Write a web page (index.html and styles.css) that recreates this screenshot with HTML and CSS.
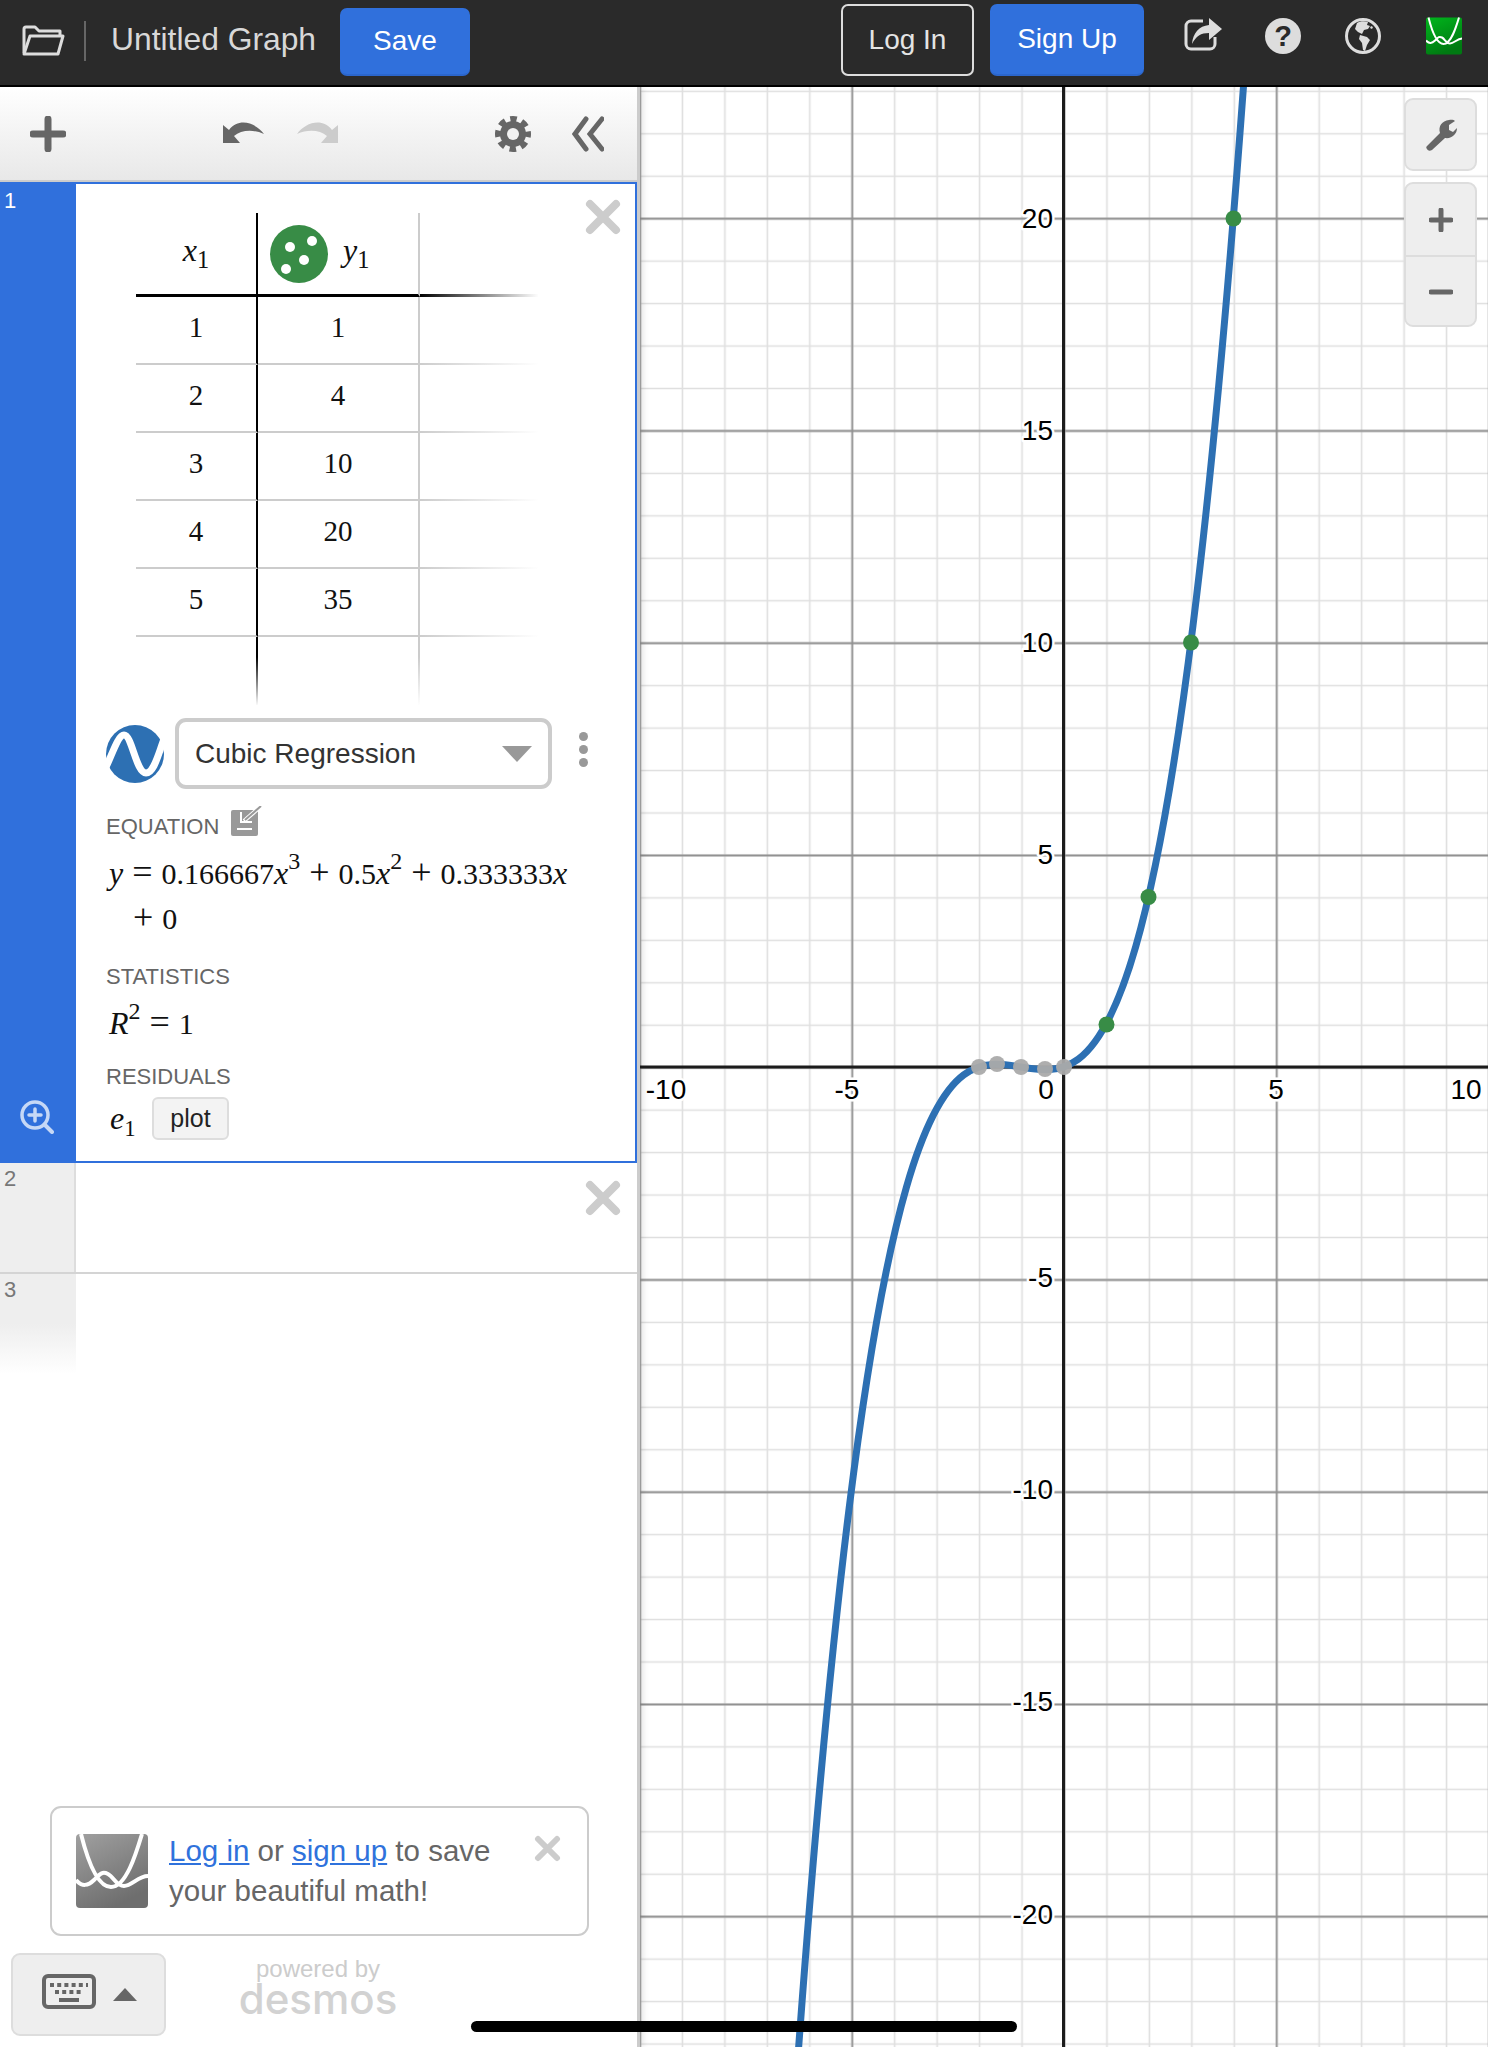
FILE: index.html
```html
<!DOCTYPE html>
<html lang="en">

<head>
    <meta charset="UTF-8" />
    <title>Untitled Graph</title>
    <link rel="stylesheet" href="styles.css">
</head>

<body>
    <div class="app">

        <!-- top bar -->
        <header class="topbar">
            <svg class="ico-folder" viewBox="0 0 43 31" fill="none" stroke="#ddd" stroke-width="3" stroke-linejoin="round">
                <path d="M2 28V4a2 2 0 0 1 2-2h9l4 4h21v5" />
                <path d="M2 29l6-18h33l-5 18z" />
            </svg>
            <span class="divider"></span>
            <span class="graph-title">Untitled Graph</span>
            <button class="btn btn-blue btn-save">Save</button>
            <span class="spacer"></span>
            <button class="btn btn-outline">Log In</button>
            <button class="btn btn-blue btn-signup">Sign Up</button>
            <svg class="ico-share" viewBox="0 0 38 33" fill="none" stroke="#ddd" stroke-width="3">
                <path d="M19 3H7a5 5 0 0 0-5 5v18a5 5 0 0 0 5 5h19a5 5 0 0 0 5-5v-7" />
                <path fill="#ddd" stroke="none" d="M25 0l13 11-13 11v-7c-8 0-13 3-17 11 1-11 7-18 17-19z" />
            </svg>
            <svg class="ico-help" viewBox="0 0 36 36">
                <circle cx="18" cy="18" r="18" fill="#ddd" />
                <text x="18" y="28" text-anchor="middle" class="help-mark">?</text>
            </svg>
            <svg class="ico-globe" viewBox="0 0 36 36">
                <circle cx="18" cy="18" r="16.5" fill="none" stroke="#ddd" stroke-width="3" />
                <path fill="#ddd" d="M12 5c3-2 8-2 11-1l-1 3 3 1-2 3-4 1-2 4-4-2-3-3zM15 17l7 2 3 3-3 5-2 6-2-1-1-7-3-4zM26 8l2 1-1 2-2-1z" />
            </svg>
            <svg class="ico-logo" viewBox="0 0 72 74">
                <defs>
                    <linearGradient id="logoGreen" x1="0" y1="0" x2="0.4" y2="1">
                        <stop offset="0" stop-color="#00b51c" />
                        <stop offset="1" stop-color="#007a12" />
                    </linearGradient>
                </defs>
                <rect width="72" height="74" rx="4" fill="url(#logoGreen)" />
                <path d="M5 0C10 20 20 53 35 53S60 20 66 0M0 46c6 7 12 6 18 0s8-9 14-6 8 12 16 12 14-10 24-10" fill="none" stroke="#fff" stroke-width="4" />
            </svg>
        </header>

        <main class="main">

            <!-- left panel -->
            <section class="panel">
                <div class="toolbar">
                    <svg class="ico-plus" viewBox="0 0 36 36">
                        <path d="M18 3v30M3 18h30" stroke="#666" stroke-width="7" stroke-linecap="round" />
                    </svg>
                    <svg class="ico-undo" viewBox="0 0 41 23">
                        <path fill="#666" d="M0 5v18h17l-6-7c7-6 19-7 30-2C33 3 16-3 6 10z" />
                    </svg>
                    <svg class="ico-undo ico-redo" viewBox="0 0 41 23">
                        <path fill="#ccc" d="M0 5v18h17l-6-7c7-6 19-7 30-2C33 3 16-3 6 10z" />
                    </svg>
                    <svg class="ico-gear" viewBox="0 0 36 36">
                        <circle cx="18" cy="18" r="13" fill="#666" />
                        <circle cx="18" cy="18" r="15" fill="none" stroke="#666" stroke-width="6" stroke-dasharray="6.5 5.28" stroke-dashoffset="3.2" />
                        <circle cx="18" cy="18" r="6" fill="#f2f2f2" />
                    </svg>
                    <svg class="ico-collapse" viewBox="0 0 32 36" fill="none" stroke="#666" stroke-width="5" stroke-linecap="round">
                        <path d="M14 3L3 18l11 15M30 3L18 18l12 15" />
                    </svg>
                </div>

                <!-- expression 1, table and regression -->
                <div class="expr expr-active">
                    <div class="gutter">
                        <span class="num">1</span>
                        <svg class="ico-zoom" viewBox="0 0 34 34" fill="none" stroke="#c6d8f6" stroke-width="3.5" stroke-linecap="round">
                            <circle cx="15" cy="15" r="13" />
                            <path d="M15 9v12M9 15h12" />
                            <path d="M25 25l7 7" stroke-width="4" />
                        </svg>
                    </div>
                    <div class="expr-body">
                        <svg class="ico-close" viewBox="0 0 36 36">
                            <path d="M5 5l26 26M31 5L5 31" stroke="#ccc" stroke-width="8" stroke-linecap="round" />
                        </svg>

                        <div class="table">
                            <div class="cell head col-a"><span class="head-x"><i>x</i><sub>1</sub></span></div>
                            <div class="cell head col-b">
                                <svg class="ico-points" viewBox="0 0 58 58">
                                    <circle cx="29" cy="29" r="29" fill="#388c46" />
                                    <circle cx="20" cy="22" r="5" fill="#fff" />
                                    <circle cx="42" cy="16" r="5" fill="#fff" />
                                    <circle cx="34" cy="35" r="5" fill="#fff" />
                                    <circle cx="16" cy="44" r="5" fill="#fff" />
                                </svg>
                                <span class="head-y"><i>y</i><sub>1</sub></span>
                            </div>
                            <div class="cell head col-c"></div>

                            <div class="cell col-a">1</div><div class="cell col-b">1</div><div class="cell col-c"></div>
                            <div class="cell col-a">2</div><div class="cell col-b">4</div><div class="cell col-c"></div>
                            <div class="cell col-a">3</div><div class="cell col-b">10</div><div class="cell col-c"></div>
                            <div class="cell col-a">4</div><div class="cell col-b">20</div><div class="cell col-c"></div>
                            <div class="cell col-a">5</div><div class="cell col-b">35</div><div class="cell col-c"></div>

                            <div class="cell last col-a"></div><div class="cell last col-b"></div><div class="cell last col-c"></div>
                        </div>

                        <div class="regression">
                            <svg class="ico-regress" viewBox="0 0 58 58">
                                <circle cx="29" cy="29" r="29" fill="#2d70b3" />
                                <path d="M0 42C6 30 12 10 18 10c8 0 12 38 22 38 8 0 12-18 18-34" fill="none" stroke="#fff" stroke-width="7" />
                            </svg>
                            <div class="select">
                                <span>Cubic Regression</span>
                                <span class="caret"></span>
                            </div>
                            <div class="kebab"><span></span><span></span><span></span></div>
                        </div>

                        <div class="label label-eq">EQUATION
                            <svg class="ico-edit" viewBox="0 0 31 30">
                                <rect y="4" width="27" height="26" rx="2" fill="#999" />
                                <path d="M6 23h15" stroke="#fff" stroke-width="2" />
                                <path d="M10 6v10h11" fill="none" stroke="#fff" stroke-width="2" />
                                <path d="M13 15L29 1" stroke="#fff" stroke-width="4" />
                                <path d="M14 14L30 0" stroke="#999" stroke-width="2" />
                            </svg>
                        </div>
                        <div class="math eq">
                            <div><i>y</i><b>=</b>0.166667<i>x</i><sup>3</sup><b>+</b>0.5<i>x</i><sup>2</sup><b>+</b>0.333333<i>x</i></div>
                            <div class="eq-wrap"><b class="lead">+</b>0</div>
                        </div>

                        <div class="label label-stats">STATISTICS</div>
                        <div class="math r2"><i>R</i><sup>2</sup><b>=</b>1</div>

                        <div class="label label-res">RESIDUALS</div>
                        <div class="residuals">
                            <span class="math e1"><i>e</i><sub>1</sub></span>
                            <button class="plot">plot</button>
                        </div>
                    </div>
                </div>

                <!-- empty expressions -->
                <div class="expr expr-empty">
                    <div class="gutter"><span class="num">2</span></div>
                    <div class="expr-body">
                        <svg class="ico-close" viewBox="0 0 36 36">
                            <path d="M5 5l26 26M31 5L5 31" stroke="#ccc" stroke-width="8" stroke-linecap="round" />
                        </svg>
                    </div>
                </div>
                <div class="expr expr-fade">
                    <div class="gutter"><span class="num">3</span></div>
                    <div class="expr-body"></div>
                </div>

                <!-- save notice -->
                <div class="notice">
                    <svg class="ico-notice" viewBox="0 0 72 74">
                        <defs>
                            <linearGradient id="logoGray" x1="0" y1="0" x2="0.5" y2="1">
                                <stop offset="0" stop-color="#a0a0a0" />
                                <stop offset="1" stop-color="#6e6e6e" />
                            </linearGradient>
                        </defs>
                        <rect width="72" height="74" rx="4" fill="url(#logoGray)" />
                        <path d="M5 0C10 20 20 53 35 53S60 20 66 0M0 46c6 7 12 6 18 0s8-9 14-6 8 12 16 12 14-10 24-10" fill="none" stroke="#fff" stroke-width="4" />
                    </svg>
                    <p><a href="#">Log in</a> or <a href="#">sign up</a> to save<br>your beautiful math!</p>
                    <svg class="ico-notice-close" viewBox="0 0 27 27">
                        <path d="M4 4l19 19M23 4L4 23" stroke="#ccc" stroke-width="6" stroke-linecap="round" />
                    </svg>
                </div>

                <div class="panel-foot">
                    <button class="kbd-btn">
                        <svg class="ico-kbd" viewBox="0 0 54 35">
                            <rect x="2" y="2" width="50" height="31" rx="4" fill="none" stroke="#666" stroke-width="4" />
                            <path d="M8 11h38M13 18h28" stroke="#666" stroke-width="4" stroke-dasharray="4 3.2" />
                            <path d="M17 26h20" stroke="#666" stroke-width="4" />
                        </svg>
                        <span class="kbd-caret"></span>
                    </button>
                    <div class="brand">
                        <div class="powered">powered by</div>
                        <div class="desmos">desmos</div>
                    </div>
                </div>
            </section>

            <!-- graph paper, viewBox is in page coordinates -->
            <section class="graph">
                <svg class="paper" viewBox="640 87 848 1960">
                    <defs>
                        <pattern id="minor" patternUnits="userSpaceOnUse" x="1043.275" y="1046.475" width="42.45" height="42.45">
                            <path d="M21.225 0v42.45M0 21.225h42.45" stroke="#dfdfdf" stroke-width="1.6" />
                        </pattern>
                        <pattern id="major" patternUnits="userSpaceOnUse" x="958.375" y="961.575" width="212.25" height="212.25">
                            <path d="M106.125 0v212.25M0 106.125h212.25" stroke="#909090" stroke-width="1.8" />
                        </pattern>
                    </defs>
                    <rect x="640" y="87" width="848" height="1960" fill="#fff" />
                    <rect x="640" y="87" width="848" height="1960" fill="url(#minor)" />
                    <rect x="640" y="87" width="848" height="1960" fill="url(#major)" />

                    <path d="M1063.5 87V2047M640 1067H1488" stroke="#1c1c1c" stroke-width="3" fill="none" />

                    <g class="axis-labels y-labels">
                        <text x="1053" y="228">20</text>
                        <text x="1053" y="440">15</text>
                        <text x="1053" y="652">10</text>
                        <text x="1053" y="864">5</text>
                        <text x="1053" y="1287">-5</text>
                        <text x="1053" y="1499">-10</text>
                        <text x="1053" y="1711">-15</text>
                        <text x="1053" y="1924">-20</text>
                    </g>
                    <g class="axis-labels x-labels">
                        <text x="666" y="1099">-10</text>
                        <text x="847" y="1099">-5</text>
                        <text x="1046" y="1099">0</text>
                        <text x="1276" y="1099">5</text>
                        <text x="1466" y="1099">10</text>
                    </g>

                    <path class="curve" d="M791.8 2142.9C944.6-59.8 1097.5 2193.8 1250.3-8.9" />

                    <g fill="#aaa" fill-opacity="0.95">
                        <circle cx="979" cy="1067" r="8" />
                        <circle cx="997" cy="1064" r="8" />
                        <circle cx="1021" cy="1067" r="8" />
                        <circle cx="1045" cy="1069" r="8" />
                        <circle cx="1064" cy="1067" r="8" />
                    </g>
                    <g fill="#388c46">
                        <circle cx="1106.5" cy="1024.5" r="8" />
                        <circle cx="1148.5" cy="897" r="8" />
                        <circle cx="1191" cy="642.5" r="8" />
                        <circle cx="1233.5" cy="218.5" r="8" />
                    </g>
                </svg>

                <!-- tools over the graph -->
                <div class="tool tool-wrench">
                    <svg class="ico-wrench" viewBox="0 0 32 32">
                        <path fill="#666" d="M2 27l13-13c-2-7 2-12 9-13 3-.5 5 0 6 1l-6 4v5l4 2 4-4c0 6-5 11-12 10L7 31c-2 1-4 1-5-1-1-1-1-2 0-3z" />
                    </svg>
                </div>
                <div class="tool tool-zoom">
                    <div class="zoom-btn">
                        <svg class="ico-sign" viewBox="0 0 24 24"><path d="M12 2v20M2 12h20" stroke="#666" stroke-width="5" stroke-linecap="round" /></svg>
                    </div>
                    <div class="zoom-btn zoom-out">
                        <svg class="ico-sign" viewBox="0 0 24 24"><path d="M2 12h20" stroke="#666" stroke-width="5" stroke-linecap="round" /></svg>
                    </div>
                </div>
            </section>
        </main>

        <!-- phone home indicator -->
        <div class="home-bar"></div>
    </div>
</body>

</html>
```

FILE: styles.css
```css
/* page */
* {
    box-sizing: border-box;
}

body {
    margin: 0;
    background: #fff;
    font-family: "Liberation Sans", Arial, sans-serif;
}

svg {
    display: block;
    flex: none;
}

.app {
    position: relative;
    width: 1488px;
    height: 2047px;
    overflow: hidden;
    display: flex;
    flex-direction: column;
}

/* top bar */
.topbar {
    height: 87px;
    flex: none;
    display: flex;
    align-items: center;
    background: #2a2a2a;
    border-bottom: 2px solid #000;
}

.ico-folder {
    width: 43px;
    height: 31px;
    margin: -4px 0 0 22px;
}

.divider {
    width: 2px;
    height: 40px;
    margin: -4px 0 0 19px;
    background: #666;
}

.graph-title {
    margin: -6px 0 0 25px;
    font-size: 31.8px;
    color: #d8d8d8;
}

.btn {
    height: 68px;
    border-radius: 7px;
    font-family: inherit;
    font-size: 28px;
    color: #fff;
}

.btn-blue {
    border: 0;
    border-bottom: 2px solid #2b66cc;
    background: #3070dc;
}

.btn-save {
    width: 130px;
    margin: 0 0 1px 24px;
}

.spacer {
    flex: 1;
}

.btn-outline {
    width: 133px;
    height: 72px;
    margin-bottom: 5px;
    background: none;
    border: 2px solid #ddd;
    color: #e4e4e4;
}

.btn-signup {
    width: 154px;
    height: 72px;
    margin: 0 0 5px 16px;
}

.ico-share {
    width: 38px;
    height: 33px;
    margin: -16px 0 0 40px;
}

.ico-help {
    width: 36px;
    height: 36px;
    margin: -14px 0 0 43px;
}

.help-mark {
    font-size: 29px;
    font-weight: bold;
    fill: #2a2a2a;
}

.ico-globe {
    width: 36px;
    height: 36px;
    margin: -14px 0 0 44px;
}

.ico-logo {
    width: 36px;
    height: 40px;
    margin: -14px 26px 0 45px;
}

/* main split */
.main {
    flex: 1;
    display: flex;
    min-height: 0;
}

/* left panel */
.panel {
    position: relative;
    z-index: 1;
    width: 640px;
    flex: none;
    display: flex;
    flex-direction: column;
    background: #fff;
    border-right: 3px solid #ccc;
    box-shadow: 2px 0 7px rgba(0, 0, 0, 0.14);
}

.toolbar {
    position: relative;
    height: 95px;
    flex: none;
    display: flex;
    align-items: center;
    background: linear-gradient(#fff, #e8e8e8);
    border-bottom: 2px solid #ccc;
}

.ico-plus {
    width: 36px;
    height: 36px;
    margin-left: 30px;
}

.ico-undo {
    width: 41px;
    height: 23px;
    margin: -4px 0 0 157px;
}

.ico-redo {
    margin-left: 33px;
    transform: scaleX(-1);
}

.ico-gear {
    width: 36px;
    height: 36px;
    margin-left: 157px;
}

.ico-collapse {
    width: 32px;
    height: 36px;
    margin-left: 41px;
}

/* expressions */
.expr {
    display: flex;
    flex: none;
}

.gutter {
    position: relative;
    width: 76px;
    flex: none;
    background: #eee;
    border-right: 2px solid #ddd;
}

.num {
    position: absolute;
    top: 3px;
    left: 4px;
    font-size: 22px;
    color: #777;
}

.expr-body {
    position: relative;
    flex: 1;
}

.ico-close {
    position: absolute;
    top: 15px;
    right: 14px;
    width: 36px;
    height: 36px;
}

.expr-active {
    height: 981px;
    border: 2px solid #3070dc;
    border-left: 0;
}

.expr-active .gutter {
    background: #3070dc;
    border-right: 0;
}

.expr-active .num {
    color: #fff;
    top: 4px;
}

.ico-zoom {
    position: absolute;
    bottom: 27px;
    left: 20px;
    width: 34px;
    height: 34px;
}

.expr-empty {
    height: 111px;
    border-bottom: 2px solid #d4d4d4;
}

.expr-empty .ico-close {
    top: 17px;
    right: 16px;
}

.expr-fade {
    height: 100px;
}

.expr-fade .gutter {
    background: linear-gradient(#eee 50%, #fff);
    border-right: 0;
}

/* table */
.table {
    display: grid;
    grid-template-columns: 122px 162px 118px;
    margin: 29px 0 0 60px;
    font-family: "Liberation Serif", serif;
    font-size: 29px;
    color: #111;
}

.cell {
    height: 68px;
    padding-bottom: 6px;
    display: flex;
    align-items: center;
    justify-content: center;
    border-bottom: 2px solid #ccc;
}

.cell.col-a {
    border-right: 2px solid #000;
}

.cell.col-b {
    border-right: 2px solid #ccc;
}

.cell.col-c {
    border-image: linear-gradient(to right, #ccc, transparent) 1;
}

.cell.head {
    height: 84px;
    padding-bottom: 0;
    border-bottom: 3px solid #000;
    font-size: 32px;
}

.cell.head.col-c {
    border-image: linear-gradient(to right, #000, transparent) 1;
}

.cell.head.col-b {
    justify-content: flex-start;
    padding-left: 12px;
}

.head-x {
    margin-top: -6px;
}

.head-y {
    margin: -6px 0 0 15px;
}

.cell.last {
    height: 68px;
    border-bottom: 0;
}

.cell.last.col-a {
    border-image: linear-gradient(#000 30%, transparent) 1;
}

.cell.last.col-b {
    border-image: linear-gradient(#ccc 30%, transparent) 1;
}

.ico-points {
    width: 58px;
    height: 58px;
}

.table sub,
.e1 sub {
    font-size: 76%;
    vertical-align: -7px;
    line-height: 0;
}

/* regression row */
.regression {
    display: flex;
    align-items: center;
    margin: 13px 0 0 30px;
}

.ico-regress {
    width: 58px;
    height: 58px;
}

.select {
    width: 377px;
    height: 71px;
    margin-left: 11px;
    padding: 0 16px;
    display: flex;
    align-items: center;
    justify-content: space-between;
    background: #fff;
    border: 4px solid #ccc;
    border-radius: 11px;
    font-size: 28px;
    color: #333;
}

.caret {
    width: 0;
    height: 0;
    border-left: 15px solid transparent;
    border-right: 15px solid transparent;
    border-top: 16px solid #999;
}

.kebab {
    display: flex;
    flex-direction: column;
    gap: 4px;
    margin: -9px 0 0 27px;
}

.kebab span {
    width: 9px;
    height: 9px;
    border-radius: 50%;
    background: #999;
}

/* regression details */
.label {
    height: 26px;
    margin-left: 30px;
    font-size: 22px;
    line-height: 26px;
    color: #666;
}

.label-eq {
    position: relative;
    margin-top: 25px;
}

.ico-edit {
    position: absolute;
    top: -8px;
    left: 125px;
    width: 31px;
    height: 30px;
}

.label-stats {
    margin-top: 23px;
}

.label-res {
    margin-top: 19px;
}

.math {
    font-family: "Liberation Serif", serif;
    font-size: 30px;
    color: #111;
}

.math i {
    font-size: 32px;
}

.math b {
    font-weight: normal;
    font-size: 36px;
    line-height: 0;
    margin: 0 9px;
}

.math sup {
    font-size: 80%;
    vertical-align: 15px;
    line-height: 0;
}

.eq {
    margin: 11px 0 0 33px;
    line-height: 45px;
}

.eq-wrap {
    padding-left: 24px;
}

.eq-wrap .lead {
    margin-left: 0;
}

.r2 {
    margin: 12px 0 0 33px;
    line-height: 43px;
}

.residuals {
    display: flex;
    align-items: center;
    margin: 7px 0 0 34px;
}

.e1 {
    width: 42px;
}

.plot {
    width: 77px;
    height: 43px;
    padding: 0;
    background: #f3f3f3;
    border: 2px solid #ddd;
    border-radius: 6px;
    font-family: inherit;
    font-size: 25px;
    color: #222;
}

/* save notice */
.notice {
    position: relative;
    display: flex;
    align-items: center;
    height: 130px;
    margin: auto 48px 0 50px;
    padding-left: 24px;
    border: 2px solid #ccc;
    border-radius: 11px;
    background: #fff;
}

.ico-notice {
    width: 72px;
    height: 74px;
}

.notice p {
    margin: 0 0 0 21px;
    font-size: 29.5px;
    line-height: 40px;
    color: #666;
}

.notice a {
    color: #2f72dc;
}

.ico-notice-close {
    position: absolute;
    top: 27px;
    right: 26px;
    width: 27px;
    height: 27px;
}

/* footer of the panel */
.panel-foot {
    display: flex;
    flex: none;
    margin: 17px 0 11px 11px;
}

.kbd-btn {
    display: flex;
    align-items: center;
    width: 155px;
    height: 83px;
    padding: 0 0 6px 29px;
    background: #eee;
    border: 2px solid #ddd;
    border-radius: 9px;
}

.ico-kbd {
    width: 54px;
    height: 35px;
}

.kbd-caret {
    width: 0;
    height: 0;
    margin: 6px 0 0 17px;
    border-left: 12px solid transparent;
    border-right: 12px solid transparent;
    border-bottom: 13px solid #666;
}

.brand {
    width: 160px;
    margin: 4px 0 0 72px;
    text-align: center;
    color: #ccc;
}

.powered {
    font-size: 24px;
    line-height: 24px;
}

.desmos {
    margin-top: -3px;
    font-family: Inter, sans-serif;
    font-size: 42px;
    font-weight: 500;
    line-height: 42px;
    color: #d2d2d2;
}

/* graph */
.graph {
    position: relative;
    flex: 1;
    min-width: 0;
}

.paper {
    width: 848px;
    height: 1960px;
}

.axis-labels text {
    font-size: 28px;
    fill: #000;
    paint-order: stroke;
    stroke: #fff;
    stroke-width: 5px;
    stroke-linejoin: round;
}

.y-labels text {
    text-anchor: end;
}

.x-labels text {
    text-anchor: middle;
}

.curve {
    fill: none;
    stroke: #2d70b3;
    stroke-width: 7;
}

/* graph tools, they float over the paper */
.tool {
    position: absolute;
    right: 11px;
    width: 73px;
    background: #eee;
    border: 2px solid #ddd;
    border-radius: 9px;
}

.tool-wrench {
    top: 11px;
    height: 73px;
    display: flex;
    align-items: center;
    justify-content: center;
}

.ico-wrench {
    width: 32px;
    height: 32px;
}

.tool-zoom {
    top: 95px;
    height: 145px;
}

.zoom-btn {
    height: 71px;
    display: flex;
    align-items: center;
    justify-content: center;
}

.zoom-out {
    border-top: 2px solid #ddd;
}

.ico-sign {
    width: 24px;
    height: 24px;
}

/* home indicator */
.home-bar {
    position: absolute;
    z-index: 2;
    left: 471px;
    top: 2021px;
    width: 546px;
    height: 11px;
    border-radius: 6px;
    background: #000;
}
```
